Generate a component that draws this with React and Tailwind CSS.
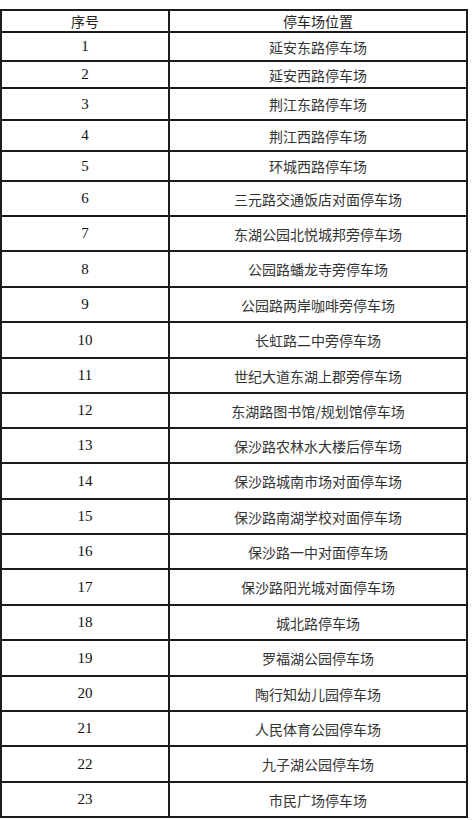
import React from "react";

const rows = [
  ["1", "延安东路停车场", "h-[29px]"],
  ["2", "延安西路停车场", "h-[27px]"],
  ["3", "荆江东路停车场", "h-[32px]"],
  ["4", "荆江西路停车场", "h-[31px]"],
  ["5", "环城西路停车场", "h-[30px]"],
  ["6", "三元路交通饭店对面停车场", "h-[35px]"],
  ["7", "东湖公园北悦城邦旁停车场", "h-[35px]"],
  ["8", "公园路蟠龙寺旁停车场", "h-[36px]"],
  ["9", "公园路两岸咖啡旁停车场", "h-[35px]"],
  ["10", "长虹路二中旁停车场", "h-[36px]"],
  ["11", "世纪大道东湖上郡旁停车场", "h-[35px]"],
  ["12", "东湖路图书馆/规划馆停车场", "h-[35px]"],
  ["13", "保沙路农林水大楼后停车场", "h-[35px]"],
  ["14", "保沙路城南市场对面停车场", "h-[36px]"],
  ["15", "保沙路南湖学校对面停车场", "h-[35px]"],
  ["16", "保沙路一中对面停车场", "h-[35px]"],
  ["17", "保沙路阳光城对面停车场", "h-[36px]"],
  ["18", "城北路停车场", "h-[35px]"],
  ["19", "罗福湖公园停车场", "h-[36px]"],
  ["20", "陶行知幼儿园停车场", "h-[35px]"],
  ["21", "人民体育公园停车场", "h-[35px]"],
  ["22", "九子湖公园停车场", "h-[36px]"],
  ["23", "市民广场停车场", "h-[35px]"],
];

export default function App() {
  return (
    <div className="w-[472px] h-[820px] bg-white overflow-hidden">
      <div className="mt-[9px] w-[468px] border-t-2 border-l-2 border-r-2 border-[#1c1c1c] flex flex-col">
        <div className="flex h-[22px] border-b-2 border-[#1c1c1c]">
          <div className="w-[168px] shrink-0 border-r-2 border-[#1c1c1c] flex items-center justify-center font-['Noto_Sans_CJK_SC',sans-serif] text-[14px] leading-none text-[#222]">
            序号
          </div>
          <div className="flex-1 flex items-center justify-center font-['Noto_Sans_CJK_SC',sans-serif] text-[14px] leading-none text-[#222]">
            停车场位置
          </div>
        </div>
        {rows.map(([n, name, h]) => (
          <div key={n} className={`flex border-b-2 border-[#1c1c1c] ${h}`}>
            <div className="w-[168px] shrink-0 border-r-2 border-[#1c1c1c] flex items-center justify-center font-['Liberation_Serif',serif] text-[15px] leading-none text-[#111]">
              {n}
            </div>
            <div className="flex-1 flex items-center justify-center font-['Noto_Sans_CJK_SC',sans-serif] text-[14px] leading-none text-[#333]">
              {name}
            </div>
          </div>
        ))}
      </div>
    </div>
  );
}
